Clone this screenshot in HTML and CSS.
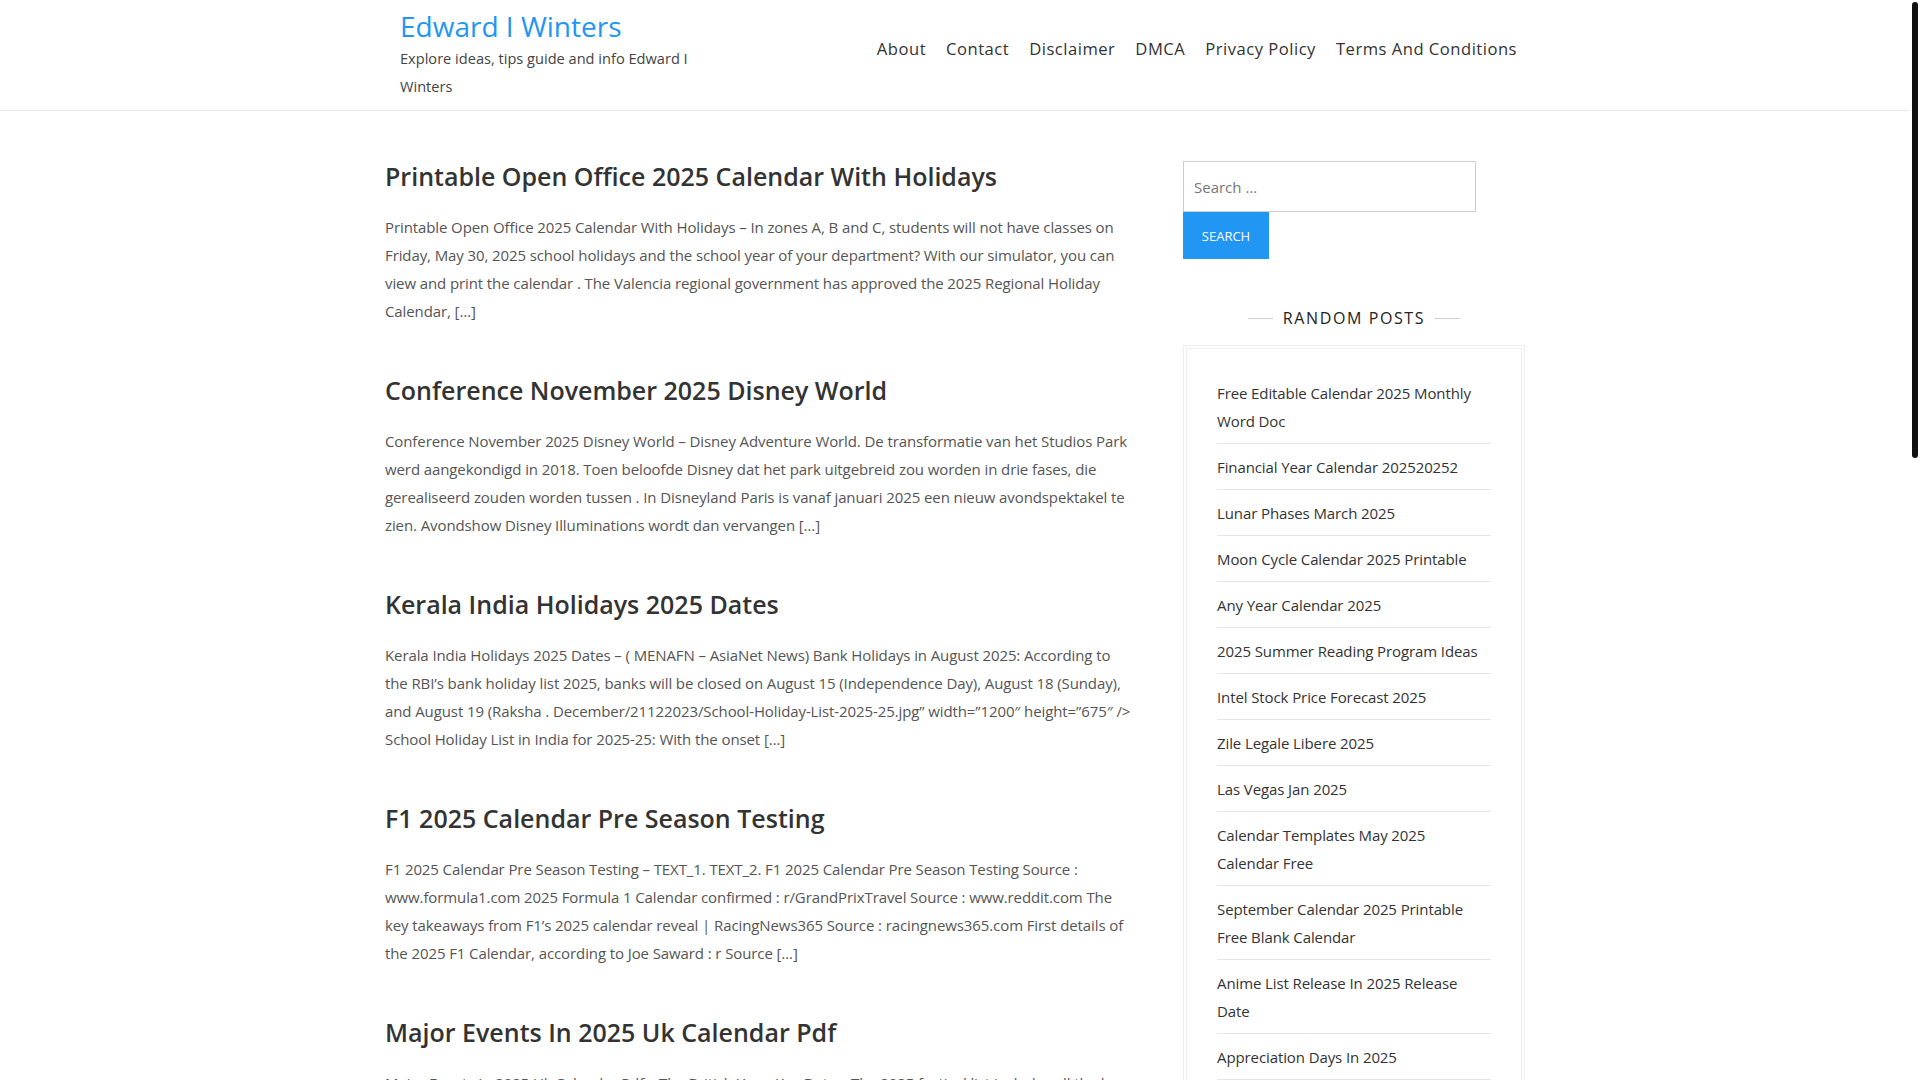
FILE: index.html
```html
<!DOCTYPE html>
<html lang="en">
<head>
<meta charset="utf-8">
<title>Edward I Winters</title>
<link rel="stylesheet" href="styles.css">
</head>
<body>
<header class="site-header">
  <div class="header-inner">
    <div class="branding">
      <a class="site-title" href="#">Edward I Winters</a>
      <p class="site-desc">Explore ideas, tips guide and info Edward I Winters</p>
    </div>
    <nav class="main-nav">
      <a href="#">About</a>
      <a href="#">Contact</a>
      <a href="#">Disclaimer</a>
      <a href="#">DMCA</a>
      <a href="#">Privacy Policy</a>
      <a href="#">Terms And Conditions</a>
    </nav>
  </div>
</header>

<div class="page">
  <main class="posts">
    <article class="post">
      <h2 class="post-title"><a href="#">Printable Open Office 2025 Calendar With Holidays</a></h2>
      <p class="post-excerpt">Printable Open Office 2025 Calendar With Holidays – In zones A, B and C, students will not have classes on Friday, May 30, 2025 school holidays and the school year of your department? With our simulator, you can view and print the calendar . The Valencia regional government has approved the 2025 Regional Holiday Calendar, […]</p>
    </article>
    <article class="post">
      <h2 class="post-title"><a href="#">Conference November 2025 Disney World</a></h2>
      <p class="post-excerpt">Conference November 2025 Disney World – Disney Adventure World. De transformatie van het Studios Park werd aangekondigd in 2018. Toen beloofde Disney dat het park uitgebreid zou worden in drie fases, die gerealiseerd zouden worden tussen . In Disneyland Paris is vanaf januari 2025 een nieuw avondspektakel te zien. Avondshow Disney Illuminations wordt dan vervangen […]</p>
    </article>
    <article class="post">
      <h2 class="post-title"><a href="#">Kerala India Holidays 2025 Dates</a></h2>
      <p class="post-excerpt">Kerala India Holidays 2025 Dates – ( MENAFN – AsiaNet News) Bank Holidays in August 2025: According to the RBI’s bank holiday list 2025, banks will be closed on August 15 (Independence Day), August 18 (Sunday), and August 19 (Raksha . December/21122023/School-Holiday-List-2025-25.jpg” width=”1200″ height=”675″ /> School Holiday List in India for 2025-25: With the onset […]</p>
    </article>
    <article class="post">
      <h2 class="post-title"><a href="#">F1 2025 Calendar Pre Season Testing</a></h2>
      <p class="post-excerpt">F1 2025 Calendar Pre Season Testing – TEXT_1. TEXT_2. F1 2025 Calendar Pre Season Testing Source : www.formula1.com 2025 Formula 1 Calendar confirmed : r/GrandPrixTravel Source : www.reddit.com The key takeaways from F1’s 2025 calendar reveal | RacingNews365 Source : racingnews365.com First details of the 2025 F1 Calendar, according to Joe Saward : r Source […]</p>
    </article>
    <article class="post">
      <h2 class="post-title"><a href="#">Major Events In 2025 Uk Calendar Pdf</a></h2>
      <p class="post-excerpt">Major Events In 2025 Uk Calendar Pdf – The British Year, Key Dates: The 2025 festival list includes all the key dates and events across the UK, from national holidays to sporting fixtures and cultural celebrations. Use the printable calendar to plan ahead for the whole year and never miss an important date […]</p>
    </article>
    <article class="post">
      <h2 class="post-title"><a href="#">Printable 2025 Monthly Calendar With Notes</a></h2>
      <p class="post-excerpt">Printable 2025 Monthly Calendar With Notes – Stay organized throughout the year with a clean monthly layout that leaves plenty of room for notes, reminders and appointments. Download the templates for free, print them at home and keep your plans on track every single month of the year […]</p>
    </article>
    <article class="post">
      <h2 class="post-title"><a href="#">School Calendar 2025 To 2026 Holidays</a></h2>
      <p class="post-excerpt">School Calendar 2025 To 2026 Holidays – Find the term dates, half term breaks and public holidays for the 2025-2026 school year. Parents and teachers can use this overview to plan family trips, training days and events well in advance of the new academic year […]</p>
    </article>
    <article class="post">
      <h2 class="post-title"><a href="#">Lunar Calendar 2025 Full Moon Dates</a></h2>
      <p class="post-excerpt">Lunar Calendar 2025 Full Moon Dates – Every full moon of 2025 is listed here together with its traditional name, the exact time of the phase and the best nights for viewing. Keep an eye on the sky for supermoons and eclipses throughout the year […]</p>
    </article>
    <article class="post">
      <h2 class="post-title"><a href="#">Fiscal Year 2025 Calendar Weeks</a></h2>
      <p class="post-excerpt">Fiscal Year 2025 Calendar Weeks – A fiscal calendar helps businesses keep track of reporting periods, quarters and week numbers. This printable version shows all 52 weeks of the fiscal year along with the start and end date of every quarter […]</p>
    </article>
    <article class="post">
      <h2 class="post-title"><a href="#">Easter Holidays 2025 Dates Uk</a></h2>
      <p class="post-excerpt">Easter Holidays 2025 Dates Uk – Easter Sunday falls on April 20 in 2025, with Good Friday and Easter Monday recognised as bank holidays in most parts of the country. Schools usually close for two weeks around the Easter weekend, so check your local authority for exact dates […]</p>
    </article>
  </main>

  <aside class="sidebar">
    <form class="search-form">
      <input class="search-field" type="search" placeholder="Search …">
      <button class="search-submit" type="button">Search</button>
    </form>

    <section class="widget">
      <h3 class="widget-title"><span>Random Posts</span></h3>
      <div class="widget-box">
        <ul class="widget-list">
          <li><a href="#">Free Editable Calendar 2025 Monthly Word Doc</a></li>
          <li><a href="#">Financial Year Calendar 202520252</a></li>
          <li><a href="#">Lunar Phases March 2025</a></li>
          <li><a href="#">Moon Cycle Calendar 2025 Printable</a></li>
          <li><a href="#">Any Year Calendar 2025</a></li>
          <li><a href="#">2025 Summer Reading Program Ideas</a></li>
          <li><a href="#">Intel Stock Price Forecast 2025</a></li>
          <li><a href="#">Zile Legale Libere 2025</a></li>
          <li><a href="#">Las Vegas Jan 2025</a></li>
          <li><a href="#">Calendar Templates May 2025 Calendar Free</a></li>
          <li><a href="#">September Calendar 2025 Printable Free Blank Calendar</a></li>
          <li><a href="#">Anime List Release In 2025 Release Date</a></li>
          <li><a href="#">Appreciation Days In 2025</a></li>
          <li><a href="#">Printable Calendar 2025 With Holidays</a></li>
          <li><a href="#">Chinese New Year 2025 Animal</a></li>
        </ul>
      </div>
    </section>
  </aside>
</div>

<div class="scroll-thumb" aria-hidden="true"></div>
</body>
</html>
```

FILE: styles.css
```css
html { background: #fff; }

body {
  margin: 0;
  padding-right: 10px;
  font-family: "Open Sans", "Liberation Sans", sans-serif;
  color: #333;
  background: #fff;
}
a { text-decoration: none; color: inherit; }

/* page scrollbar thumb (overlay) */
.scroll-thumb {
  position: fixed;
  top: 2px;
  right: 2px;
  width: 6px;
  height: 456px;
  background: #111;
  border-radius: 3px;
}

.site-header { border-bottom: 1px solid #e8e8e8; }
.header-inner {
  width: 1140px;
  margin: 0 auto;
  display: flex;
  justify-content: space-between;
  align-items: flex-start;
  height: 110px;
  box-sizing: border-box;
}
.branding { padding-left: 15px; width: 300px; }
.site-title {
  display: block;
  color: #2196f3;
  font-size: 28px;
  font-weight: 500;
  line-height: 40px;
  margin-top: 6px;
}
.site-desc {
  margin: -2px 0 0;
  font-size: 14.6px;
  line-height: 28px;
  color: #444;
}
.main-nav {
  display: flex;
  padding-top: 37px;
  margin-right: -2px;
}
.main-nav a {
  font-size: 16.6px;
  line-height: 24px;
  color: #333;
  padding: 0 10px;
  letter-spacing: 0.5px;
}

.page {
  width: 1140px;
  margin: 0 auto;
  display: grid;
  grid-template-columns: 750px 342px;
  column-gap: 48px;
  padding-top: 40px;
}
.post { margin-bottom: 40px; }
.post-title {
  margin: 0;
  font-size: 25px;
  font-weight: 600;
  line-height: 50px;
  color: #333;
}
.post-excerpt {
  margin: 12px 0 0;
  font-size: 15px;
  line-height: 28px;
  letter-spacing: -0.1px;
  color: #555;
}

.search-form { display: flex; flex-direction: column; align-items: flex-start; margin-top: 10px; }
.search-field {
  width: 293px;
  height: 51px;
  box-sizing: border-box;
  border: 1px solid #ccc;
  padding: 0 10px;
  font-family: inherit;
  font-size: 15px;
  color: #555;
  outline: none;
}
.search-field::placeholder { color: #777; }
.search-submit {
  width: 86px;
  height: 47px;
  border: 0;
  background: #2196f3;
  color: #fff;
  font-family: inherit;
  font-size: 13px;
  text-transform: uppercase;
  cursor: pointer;
}

.widget { margin-top: 45px; }
.widget-title {
  display: flex;
  justify-content: center;
  align-items: center;
  gap: 10px;
  margin: 0 0 13px;
  font-size: 16px;
  font-weight: 500;
  letter-spacing: 1.6px;
  text-transform: uppercase;
  color: #222;
  line-height: 28px;
}
.widget-title::before, .widget-title::after {
  content: "";
  width: 25px;
  height: 1px;
  background: #ccc;
}
.widget-box {
  border: 1px solid #eee;
  padding: 2px;
}
.widget-list {
  list-style: none;
  margin: 0;
  border: 1px solid #eee;
  padding: 21px 30px;
}
.widget-list li {
  padding: 9px 0 8px;
  border-bottom: 1px solid #e5e5e5;
  font-size: 15px;
  line-height: 28px;
  letter-spacing: -0.1px;
  color: #333;
}
```
